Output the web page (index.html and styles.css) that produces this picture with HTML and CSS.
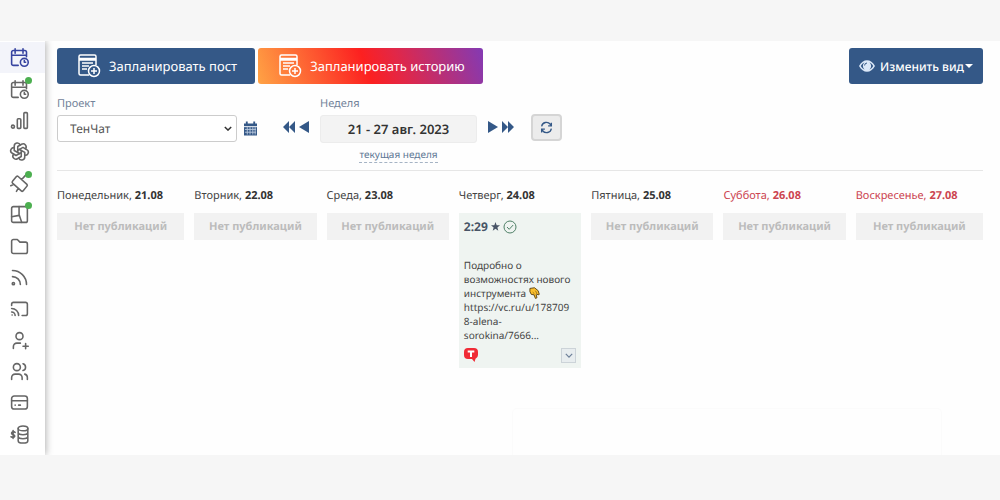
FILE: index.html
```html
<!DOCTYPE html>
<html lang="ru">
<head>
<meta charset="utf-8">
<meta name="viewport" content="width=device-width, initial-scale=1">
<title>Планировщик публикаций</title>
<link rel="stylesheet" href="styles.css">
</head>
<body>
<svg class="sprite" aria-hidden="true">
  <symbol id="calendar-clock" viewBox="0 0 24 24"><path d="M10.500 21H5a2 2 0 0 1-2-2V6a2 2 0 0 1 2-2h13a2 2 0 0 1 2 2v5M16 2v5M7 2v5M3 9.500h17"/><circle cx="17.500" cy="17.500" r="4.500"/><path d="M17.500 15.500v2h1.500"/></symbol>
  <symbol id="post-plus" viewBox="0 0 24 24"><path d="M12 21H3.500A1.500 1.500 0 0 1 2 19.500v-17A1.500 1.500 0 0 1 3.500 1h14A1.500 1.500 0 0 1 19 2.500V11M2 4.500h17M2 6h17M5 9h11M5 12h7M5 15h5"/><circle cx="17" cy="17" r="5.500"/><path d="M17 14v6M14 17h6"/></symbol>
</svg>
<div class="app">
  <nav class="sidebar" aria-label="Разделы">
    <a class="nav-item active" href="#" aria-label="Календарь"><svg class="icon"><use href="#calendar-clock"/></svg></a>
    <a class="nav-item" href="#" aria-label="Расписание"><span class="mark"><svg class="icon"><use href="#calendar-clock"/></svg><i class="dot"></i></span></a>
    <a class="nav-item" href="#" aria-label="Статистика"><svg class="icon" viewBox="0 0 24 24"><circle cx="4.500" cy="19" r="1.700"/><rect x="9.500" y="10" width="4" height="11" rx="1"/><rect x="17" y="3" width="4" height="18" rx="1"/></svg></a>
    <a class="nav-item" href="#" aria-label="Нейросеть"><svg class="icon" viewBox="0 0 24 24"><path d="M11.217 19.384a3.501 3.501 0 0 0 6.783-1.217v-5.167l-6-3.350"/><path d="M5.214 15.014a3.501 3.501 0 0 0 4.446 5.266l4.340-2.534v-6.946"/><path d="M6 7.630c-1.391-.236-2.787.395-3.534 1.689a3.474 3.474 0 0 0 1.271 4.745l4.263 2.514 6-3.348"/><path d="M12.783 4.616a3.501 3.501 0 0 0-6.783 1.217v5.067l6 3.450"/><path d="M18.786 8.986a3.501 3.501 0 0 0-4.446-5.266l-4.340 2.534v6.946"/><path d="M18 16.302c1.391.236 2.787-.395 3.534-1.689a3.474 3.474 0 0 0-1.271-4.745l-4.308-2.514-5.955 3.420"/></svg></a>
    <a class="nav-item" href="#" aria-label="Интеграции"><span class="mark"><svg class="icon" viewBox="0 0 24 24"><path d="M8.500 4a1.500 1.500 0 0 1 2 0L20.500 13a1.500 1.500 0 0 1 0 2L16 20.500a1.500 1.500 0 0 1-2 0L4 11.500a1.500 1.500 0 0 1 0-2zM5.500 13 2 14.500M10.500 17.500 8.500 21M14.500 7.500 18.500 3"/></svg><i class="dot"></i></span></a>
    <a class="nav-item" href="#" aria-label="Шаблоны"><span class="mark"><svg class="icon" viewBox="0 0 24 24"><rect x="3" y="3" width="18" height="18" rx="2"/><path d="M11.500 3v9l3 9M3 14.500l8.500-1.500"/></svg><i class="dot"></i></span></a>
    <a class="nav-item" href="#" aria-label="Файлы"><svg class="icon" viewBox="0 0 24 24"><path d="M5 4h4.500l3 3H19a2 2 0 0 1 2 2v9a2 2 0 0 1-2 2H5a2 2 0 0 1-2-2V6a2 2 0 0 1 2-2z"/></svg></a>
    <a class="nav-item" href="#" aria-label="RSS"><svg class="icon" viewBox="0 0 24 24"><circle cx="5" cy="19" r="1.300"/><path d="M4 4a16 16 0 0 1 16 16M4 11a9 9 0 0 1 9 9"/></svg></a>
    <a class="nav-item" href="#" aria-label="Трансляция"><svg class="icon" viewBox="0 0 24 24"><path d="M3.500 19.500h.1M7 20a4 4 0 0 0-4-4M11 20a8 8 0 0 0-8-8M15 20h4a2 2 0 0 0 2-2V7a2 2 0 0 0-2-2H5a2 2 0 0 0-2 2v1.500"/></svg></a>
    <a class="nav-item" href="#" aria-label="Добавить пользователя"><svg class="icon" viewBox="0 0 24 24"><circle cx="12" cy="7" r="4"/><path d="M5 21v-2a4 4 0 0 1 4-4h4M16 18.500h6M19 15.500v6"/></svg></a>
    <a class="nav-item" href="#" aria-label="Команда"><svg class="icon" viewBox="0 0 24 24"><circle cx="9" cy="7" r="4"/><path d="M3 21v-2a4 4 0 0 1 4-4h4a4 4 0 0 1 4 4v2M16 3.200a4 4 0 0 1 0 7.700M18 15a4 4 0 0 1 3 4v2"/></svg></a>
    <a class="nav-item" href="#" aria-label="Оплата"><svg class="icon" viewBox="0 0 24 24"><rect x="3" y="4.500" width="18" height="15" rx="3"/><path d="M3 10h18M7 15h.1M11 15h2"/></svg></a>
    <a class="nav-item" href="#" aria-label="Баланс"><svg class="icon" viewBox="0 0 24 24"><path d="M7 9.500c-3-2-5.500 1-3 2.300l1.500.6c2.500 1.300 0 4.200-3.200 2.200M4.700 7.500v9"/><ellipse cx="16" cy="5" rx="5.500" ry="2.800"/><path d="M10.500 5v14c0 3.700 11 3.700 11 0V5M10.500 9.500c0 3.700 11 3.700 11 0M10.500 14c0 3.700 11 3.700 11 0"/></svg></a>
  </nav>
  <main class="content">
    <div class="actions">
      <button class="btn" type="button"><svg class="btn-icon"><use href="#post-plus"/></svg>Запланировать пост</button>
      <button class="btn story" type="button"><svg class="btn-icon"><use href="#post-plus"/></svg>Запланировать историю</button>
      <button class="btn view" type="button"><svg class="eye" viewBox="0 0 16 12"><path fill="currentColor" fill-rule="evenodd" d="M0 6C4-1.700 12-1.700 16 6c-4 7.700-12 7.700-16 0zm1.800 0c1 1.800 2.200 3 3.800 3.600A4.600 4.600 0 0 1 5.500 2.500C4 3 2.800 4.200 1.800 6zm8.600-3.600a4.600 4.600 0 0 1 0 7.200c1.600-.6 2.800-1.800 3.800-3.600-1-1.800-2.200-3-3.800-3.600z"/><path fill="none" stroke="#345887" stroke-width="1" d="M5.600 5.500A2.500 2.500 0 0 1 8 3"/></svg>Изменить вид<i class="caret"></i></button>
    </div>
    <div class="filters">
      <div class="field project">
        <label for="project">Проект</label>
        <div class="row">
          <span class="select-wrap"><select id="project"><option>ТенЧат</option></select><svg class="chevron" viewBox="0 0 10 6"><path d="m1 1 4 4 4-4"/></svg></span>
          <button class="plain" type="button" aria-label="Открыть календарь"><svg class="cal" viewBox="0 0 14 15"><path fill="#345887" d="M0 2h2V0h2v2h6V0h2v2h2v13H0z"/><path stroke="#fff" stroke-width="1" d="M0 5.500h14"/><path stroke="#b9c8dc" stroke-width="1" d="M1 8.500h12M1 11.500h12M3.500 6v8M6.500 6v8M9.500 6v8M12 6v8"/></svg></button>
        </div>
      </div>
      <div class="arrows">
        <button class="plain" type="button" aria-label="На месяц назад"><svg class="double" viewBox="0 0 12 12"><path d="M6 0v12L0 6zM12 0v12L6 6z"/></svg></button>
        <button class="plain" type="button" aria-label="Предыдущая неделя"><svg class="single" viewBox="0 0 10 12"><path d="M10 0v12L0 6z"/></svg></button>
      </div>
      <div class="field week">
        <label for="week">Неделя</label>
        <input id="week" type="text" value="21 - 27 авг. 2023" readonly>
        <a class="current" href="#">текущая неделя</a>
      </div>
      <div class="arrows">
        <button class="plain" type="button" aria-label="Следующая неделя"><svg class="single" viewBox="0 0 10 12"><path d="M0 0v12l10-6z"/></svg></button>
        <button class="plain" type="button" aria-label="На месяц вперёд"><svg class="double" viewBox="0 0 12 12"><path d="M0 0v12l6-6zM6 0v12l6-6z"/></svg></button>
      </div>
      <button class="refresh" type="button" aria-label="Обновить"><svg viewBox="0 0 24 24"><path d="M3 10a9 9 0 0 1 16-4l2 2M21 3v6h-6M21 14a9 9 0 0 1-16 4l-2-2M3 21v-6h6"/></svg></button>
    </div>
    <div class="days">
      <section><h2>Понедельник, <b>21.08</b></h2><p class="empty">Нет публикаций</p></section>
      <section><h2>Вторник, <b>22.08</b></h2><p class="empty">Нет публикаций</p></section>
      <section><h2>Среда, <b>23.08</b></h2><p class="empty">Нет публикаций</p></section>
      <section><h2>Четверг, <b>24.08</b></h2>
        <article class="card">
          <header><b>2:29</b><svg class="star" viewBox="0 0 10 10"><path d="m5 0 1.300 3.500 3.700.2-2.900 2.300 1 3.700L5 7.600 1.900 9.700l1-3.700L0 3.700l3.700-.2z"/></svg><svg class="check" viewBox="0 0 14 14"><circle cx="7" cy="7" r="6"/><path d="m4 7 2.200 2.300L10.200 5"/></svg></header>
          <p class="text">Подробно о возможностях нового инструмента <svg class="hand" viewBox="0 0 12 13"><path fill="#fbc02d" stroke="#5a4010" stroke-width="1" d="M1 1.500 6 .8 10 4l1.200 4-1.400.6L8.500 7.500l-.7.5.9 3.700-1.700.7L5.500 8.500 2.500 8 1 5z"/><path stroke="#76520d" stroke-width=".7" d="m4 5.500 2 2M7 4l1.500 3"/></svg> https://vc.ru/u/1787098-alena-sorokina/7666...</p>
          <footer><svg class="tenchat" viewBox="0 0 14 14"><path fill="#f02b36" d="M4 0h6a4 4 0 0 1 4 4v3a4 4 0 0 1-2.500 3.700L10.500 14 8 11H4a4 4 0 0 1-4-4V4a4 4 0 0 1 4-4z"/><path stroke="#fff" stroke-width="2" d="M3.700 3.500h6.600M7 3.500V9"/></svg><button class="more" type="button" aria-label="Действия"><svg viewBox="0 0 10 6"><path d="m1 1 4 4 4-4"/></svg></button></footer>
        </article>
      </section>
      <section><h2>Пятница, <b>25.08</b></h2><p class="empty">Нет публикаций</p></section>
      <section class="weekend"><h2>Суббота, <b>26.08</b></h2><p class="empty">Нет публикаций</p></section>
      <section class="weekend"><h2>Воскресенье, <b>27.08</b></h2><p class="empty">Нет публикаций</p></section>
    </div>
    <div class="panel"></div>
  </main>
</div>
</body>
</html>
```
FILE: styles.css
```css
* { box-sizing: border-box; }
body {
  margin: 0;
  min-height: 100vh;
  padding: 41px 0 45px;
  display: flex;
  flex-direction: column;
  background: #f6f6f6;
  color: #444;
  font-family: "Noto Sans", "Open Sans", sans-serif;
  font-size: 11px;
  text-rendering: geometricPrecision;
}
button, select, input { font: inherit; color: inherit; margin: 0; text-rendering: inherit; }
button { cursor: pointer; }
svg { display: block; flex: none; fill: none; }
.sprite { position: absolute; width: 0; height: 0; }
.app { flex: 1; display: flex; background: #fefefe; }

.sidebar {
  width: 45px;
  flex: none;
  display: flex;
  flex-direction: column;
  padding: 1px 0 5px;
  background: #fff;
  box-shadow: 1px 0 7px rgba(0, 0, 0, .3);
  clip-path: inset(0 -12px 0 0);
}
.nav-item {
  flex: 1;
  display: flex;
  align-items: center;
  padding-left: 9px;
  color: #666;
}
.nav-item.active { background: #f3f4fa; color: #3744a0; }
.icon {
  width: 21px;
  height: 21px;
  stroke: currentColor;
  stroke-width: 1.8;
  stroke-linecap: round;
  stroke-linejoin: round;
}
.mark { position: relative; }
.dot {
  position: absolute;
  top: -2px;
  right: -2px;
  width: 7px;
  height: 7px;
  border-radius: 50%;
  background: #4caf50;
}

.content {
  flex: 1;
  min-width: 0;
  display: flex;
  flex-direction: column;
  padding: 7px 17px 0 12px;
}
.actions { display: flex; gap: 3px; }
.btn {
  height: 36px;
  display: flex;
  align-items: center;
  gap: 8px;
  padding: 0 18px 0 20px;
  border: 0;
  border-radius: 3px;
  background: #345887;
  color: #fff;
  font-size: 13px;
  font-weight: 400;
  white-space: nowrap;
}
.btn.story { background: linear-gradient(70deg, #ffa345, #fc2020 48%, #e22747 62%, #833ab4); }
.btn.view { margin-left: auto; gap: 5px; padding: 0 10px; font-size: 12px; font-weight: 500; }
.btn-icon { width: 24px; height: 24px; stroke: currentColor; stroke-width: 1.5; }
.eye { width: 16px; height: 12px; color: #dce8f8; }
.caret { border: 4px solid transparent; border-top-color: #fff; border-bottom: 0; margin-left: -4px; }

.filters {
  display: flex;
  align-items: flex-start;
  padding: 12px 0 7px;
  border-bottom: 1px solid #e6e6e6;
}
.field { display: flex; flex-direction: column; }
.field label { line-height: 15px; margin-bottom: 4px; color: #73839a; }
.row { display: flex; align-items: center; gap: 7px; }
.select-wrap { display: grid; align-items: center; width: 180px; }
.select-wrap > * { grid-area: 1 / 1; }
select {
  appearance: none;
  height: 27px;
  padding: 0 12px;
  border: 1px solid #ccc;
  border-radius: 3px;
  background: #fff;
  color: #555;
  font-size: 12px;
}
.chevron {
  width: 8px;
  height: 5px;
  justify-self: end;
  margin-right: 5px;
  stroke: #333;
  stroke-width: 1.8;
  pointer-events: none;
}
.plain { padding: 0; border: 0; background: none; }
.cal { width: 13px; height: 15px; }
.arrows { display: flex; align-items: center; gap: 4px; padding-top: 25px; }
.arrows path { fill: #345887; }
.single { width: 10px; height: 12px; }
.double { width: 12px; height: 12px; }
.project { margin-right: 26px; }
.week { width: 157px; margin: 0 11px; }
.week input {
  width: 100%;
  height: 28px;
  padding: 0;
  border: 1px solid #ececec;
  border-radius: 3px;
  background: #f3f3f3;
  color: #333;
  font-size: 13px;
  font-weight: 600;
  text-align: center;
}
.current {
  align-self: center;
  margin-top: 4px;
  line-height: 15px;
  font-size: 10px;
  color: #5d7694;
  text-decoration: none;
  border-bottom: 1px dashed #a5b3c4;
}
.refresh {
  display: grid;
  place-items: center;
  width: 31px;
  height: 27px;
  margin: 18px 0 0 17px;
  padding: 0;
  border: 2px solid #d5d5d5;
  border-radius: 4px;
  background: #ececec;
}
.refresh svg { width: 13px; height: 13px; stroke: #345887; stroke-width: 2.4; }

.days {
  display: grid;
  grid-template-columns: 127fr repeat(5, 122fr) 127fr;
  gap: 10px;
  padding-top: 17px;
}
.days section { min-width: 0; }
h2 { margin: 0 0 9px; font-size: 11px; font-weight: 400; line-height: 16px; white-space: nowrap; }
h2 b { font-weight: 700; color: #333; }
.weekend h2, .weekend b { color: #cc4450; }
.empty {
  margin: 0;
  line-height: 27px;
  background: #f2f2f2;
  color: #bcbcbc;
  font-weight: 700;
  text-align: center;
}
.card { padding: 5px; background: #eff4f1; }
.card header {
  display: flex;
  align-items: center;
  gap: 3px;
  margin-bottom: 23px;
  line-height: 17px;
  font-size: 12px;
  color: #485466;
}
.star { width: 9px; height: 9px; fill: #485466; }
.check { width: 14px; height: 14px; stroke: #4f8067; }
.text { margin: 0; padding-right: 3px; line-height: 14px; font-size: 10px; word-break: break-word; }
.hand { display: inline-block; width: 11px; height: 12px; vertical-align: -2px; }
.card footer { display: flex; justify-content: space-between; padding-top: 6px; }
.tenchat { width: 14px; height: 14px; }
.more {
  display: grid;
  place-items: center;
  width: 15px;
  height: 15px;
  padding: 0;
  border: 1px solid #ccd3d8;
  background: #e8edef;
}
.more svg { width: 8px; height: 5px; stroke: #6d7f98; stroke-width: 1.5; }
.panel {
  flex: 1;
  margin: 40px 41px 0 455px;
  border: 1px solid #fbfbfb;
  border-bottom: 0;
  border-radius: 5px 5px 0 0;
}
```
